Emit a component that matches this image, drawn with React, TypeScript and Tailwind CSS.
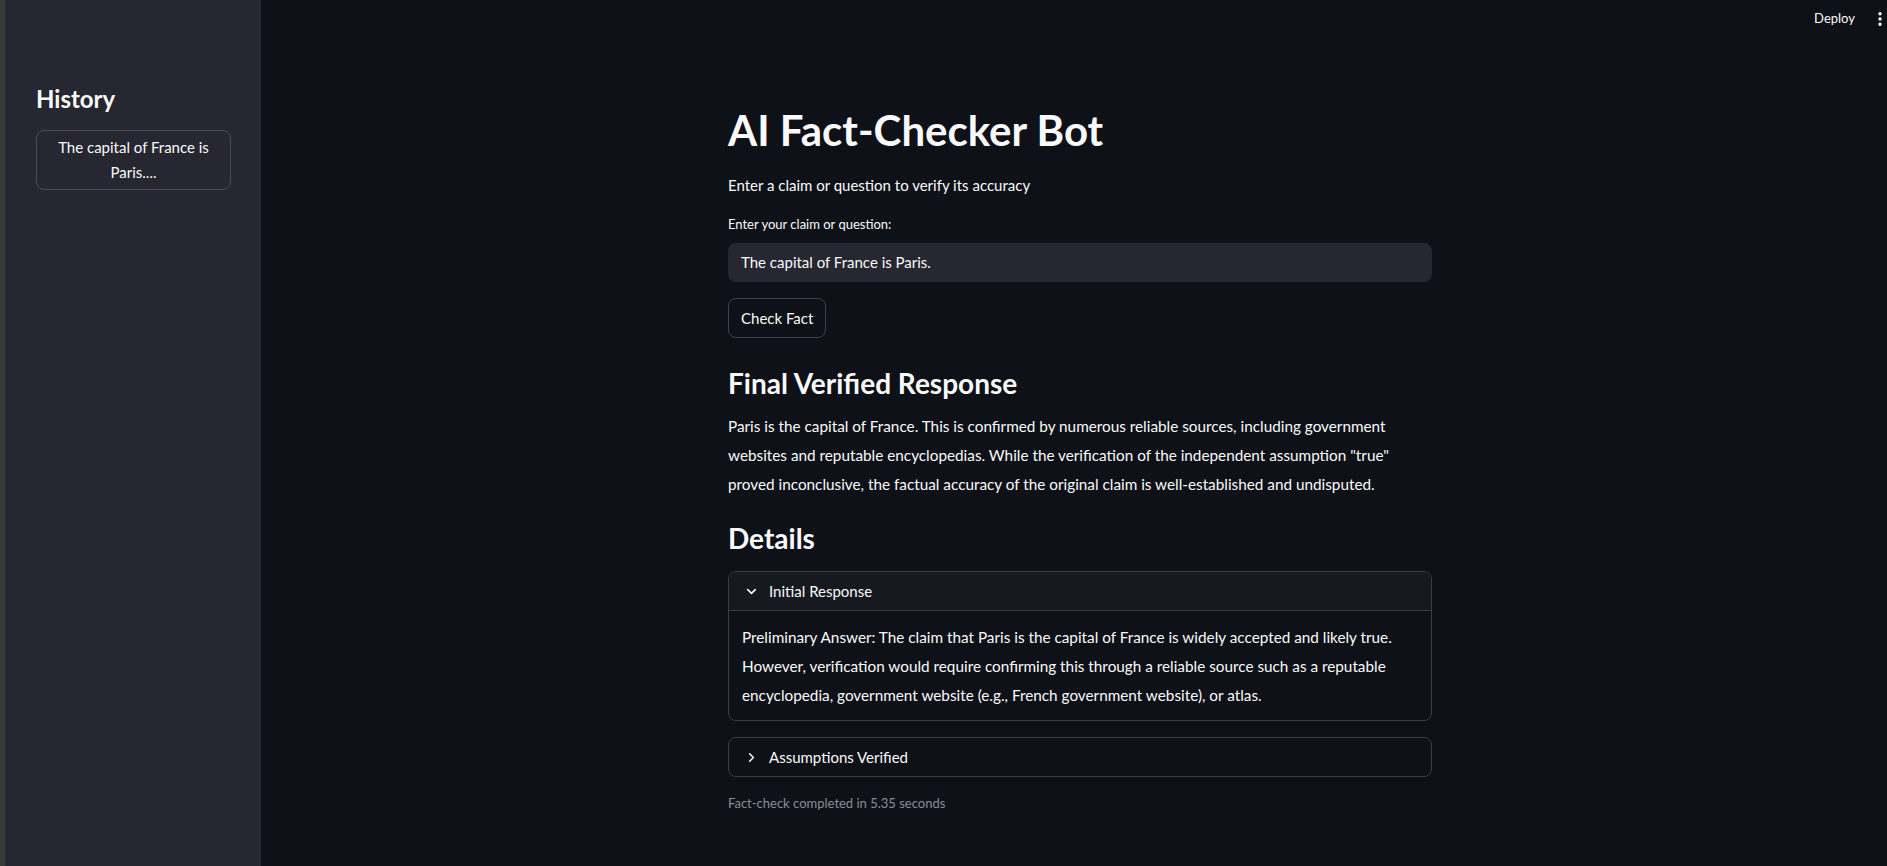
import React from 'react'
import { ChevronDown, ChevronRight, EllipsisVertical } from 'lucide-react'

const font = { fontFamily: 'Lato, "Noto Sans", sans-serif' }

const Sidebar = () => {
    return (
        <aside className="flex h-full w-[261px] shrink-0">
            <div className="w-[5px] bg-[#3a3a3a]" />
            <div className="flex-1 bg-[#262730] pl-[31px] pt-[83px]">
                <h2 className="text-[24px] font-bold leading-[32px] text-[#fafafa]">History</h2>
                <button className="mt-[15px] w-[195px] h-[60px] rounded-lg border border-[#4b4c57] text-[15px] leading-[25px] text-[#fafafa] text-center px-3">
                    The capital of France is Paris....
                </button>
            </div>
        </aside>
    )
}

const Expander = ({ title, open, children }: { title: string; open?: boolean; children?: React.ReactNode }) => {
    return (
        <div className="rounded-lg border border-[#3b3d45] overflow-hidden">
            <div className={`flex items-center h-[38px] pl-[15px] gap-[10px] text-[15px] text-[#fafafa] ${open ? 'bg-[#161920] border-b border-[#3b3d45] h-[39px]' : ''}`}>
                {open ? <ChevronDown size={15} strokeWidth={2.5} /> : <ChevronRight size={15} strokeWidth={2.5} />}
                <span>{title}</span>
            </div>
            {open && (
                <div className="px-[13px] pt-[12px] pb-[10px] text-[15.3px] leading-[29px] text-[#fafafa]">
                    {children}
                </div>
            )}
        </div>
    )
}

export default function App() {
    return (
        <div className="flex w-full h-[866px] bg-[#0e1117] overflow-hidden" style={font}>
            <Sidebar />
            <main className="relative flex-1 flex justify-center pl-[12px]">
                <div className="absolute top-0 right-0 flex items-center h-[38px] gap-[16px] text-[13px] text-[#fafafa]">
                    <span>Deploy</span>
                    <EllipsisVertical size={18} strokeWidth={2.5} className="-mr-[2px]" />
                </div>
                <div className="w-[704px] pt-[100px] flex flex-col">
                    <h1 className="text-[42px] font-bold leading-[60px] text-[#fafafa]">AI Fact-Checker Bot</h1>
                    <p className="mt-[12px] text-[15px] leading-[26px] text-[#fafafa]">Enter a claim or question to verify its accuracy</p>
                    <label className="mt-[16px] text-[13px] leading-[20px] text-[#fafafa]">Enter your claim or question:</label>
                    <div className="mt-[9px] h-[39px] rounded-lg bg-[#262730] flex items-center px-[13px] text-[15px] text-[#fafafa]">
                        The capital of France is Paris.
                    </div>
                    <div className="mt-[16px]">
                        <button className="h-[40px] px-[12px] rounded-lg border border-[#3f414b] text-[15px] text-[#fafafa]">Check Fact</button>
                    </div>
                    <h2 className="mt-[25px] text-[28px] font-bold leading-[40px] text-[#fafafa]">Final Verified Response</h2>
                    <p className="mt-[9px] text-[15.3px] leading-[29px] text-[#fafafa]">
                        Paris is the capital of France. This is confirmed by numerous reliable sources, including government websites and reputable encyclopedias. While the verification of the independent assumption "true" proved inconclusive, the factual accuracy of the original claim is well-established and undisputed.
                    </p>
                    <h2 className="mt-[19px] text-[28px] font-bold leading-[40px] text-[#fafafa]">Details</h2>
                    <div className="mt-[13px]">
                        <Expander title="Initial Response" open>
                            Preliminary Answer: The claim that Paris is the capital of France is widely accepted and likely true. However, verification would require confirming this through a reliable source such as a reputable encyclopedia, government website (e.g., French government website), or atlas.
                        </Expander>
                    </div>
                    <div className="mt-[16px]">
                        <Expander title="Assumptions Verified" />
                    </div>
                    <p className="mt-[16px] text-[13px] leading-[20px] text-[#8b8d98]">Fact-check completed in 5.35 seconds</p>
                </div>
            </main>
        </div>
    )
}
